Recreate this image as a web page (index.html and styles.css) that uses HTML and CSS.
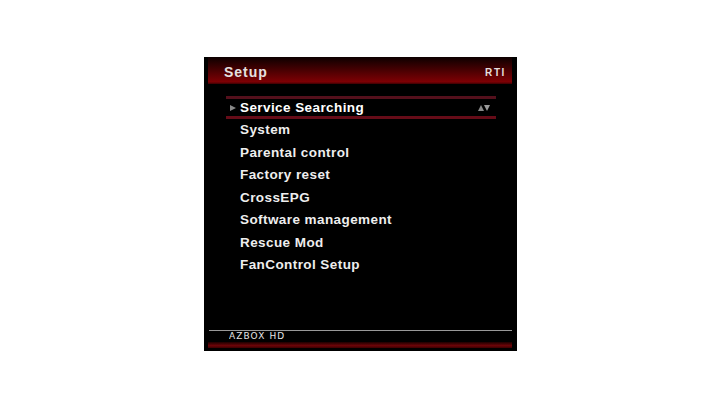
FILE: index.html
```html
<!DOCTYPE html>
<html lang="en">
<head>
    <meta charset="UTF-8">
    <title>Setup</title>
    <link rel="stylesheet" href="styles.css">
</head>
<body>
    <div class="screen">
        <div class="title-bar">
            <span class="title">Setup</span>
            <span class="channel">RTI</span>
        </div>
        <ul class="menu">
            <li class="menu-item selected">
                <span class="pointer"></span>
                <span>Service Searching</span>
                <span class="arrows"><span class="arrow-up"></span><span class="arrow-down"></span></span>
            </li>
            <li class="menu-item">System</li>
            <li class="menu-item">Parental control</li>
            <li class="menu-item">Factory reset</li>
            <li class="menu-item">CrossEPG</li>
            <li class="menu-item">Software management</li>
            <li class="menu-item">Rescue Mod</li>
            <li class="menu-item">FanControl Setup</li>
        </ul>
        <div class="footer">
            <div class="brand">AZBOX HD</div>
            <div class="footer-bar"></div>
        </div>
    </div>
</body>
</html>
```

FILE: styles.css
```css
* {
    margin: 0;
    padding: 0;
    box-sizing: border-box;
}

body {
    width: 720px;
    height: 405px;
    background: #fff;
    display: flex;
    justify-content: center;
    align-items: flex-start;
    padding-top: 57px;
    font-family: 'Liberation Sans', Arial, sans-serif;
    overflow: hidden;
}

.screen {
    width: 313px;
    height: 294px;
    margin-left: 1px;
    background: #000;
    display: flex;
    flex-direction: column;
    color: #eee;
    padding: 0 5px 3px 4px;
}

.title-bar {
    height: 27px;
    display: flex;
    justify-content: space-between;
    align-items: center;
    padding: 3px 7px 0 16px;
    background: linear-gradient(180deg, #0c0000, #4a0002 50%, #7e0004 92%, #3a0002);
}

.title {
    font-size: 14px;
    font-weight: bold;
    letter-spacing: 0.95px;
    color: #e6e0e0;
}

.channel {
    font-size: 10px;
    font-weight: bold;
    letter-spacing: 1.6px;
    margin-right: -1px;
    color: #e6dede;
}

.menu {
    list-style: none;
    margin: 12px 16px 0 18px;
    flex: 1;
}

.menu-item {
    height: 22.5px;
    line-height: 21.5px;
    padding-left: 14px;
    font-size: 13.5px;
    font-weight: bold;
    letter-spacing: 0.42px;
    color: #eee;
}

.selected {
    height: 23px;
    display: flex;
    align-items: center;
    padding-left: 0;
    border-top: 3px solid #54101c;
    border-bottom: 3px solid #660c18;
    color: #fff;
}

.pointer {
    width: 0;
    height: 0;
    margin: 0 4px 0 4px;
    border-left: 6px solid #888;
    border-top: 3.5px solid transparent;
    border-bottom: 3.5px solid transparent;
}

.arrows {
    margin-left: auto;
    margin-right: 6px;
    display: flex;
}

.arrow-up {
    border-bottom: 6px solid #888;
    border-left: 3.25px solid transparent;
    border-right: 3.25px solid transparent;
}

.arrow-down {
    border-top: 6px solid #999;
    border-left: 3.25px solid transparent;
    border-right: 3.25px solid transparent;
}

.footer {
    border-top: 1px solid #999;
    margin-left: 1px;
}

.brand {
    height: 10px;
    margin-top: 1px;
    padding-left: 20px;
    font-family: 'DejaVu Sans', sans-serif;
    font-size: 8px;
    line-height: 10px;
    letter-spacing: 1px;
    color: #fff;
    opacity: 0.9;
    transform: scaleX(1.12);
    transform-origin: 20px 0;
}

.footer-bar {
    height: 6px;
    margin-left: -1px;
    background: linear-gradient(180deg, #1c0000, #6c0408 60%, #3c0002);
}
```
